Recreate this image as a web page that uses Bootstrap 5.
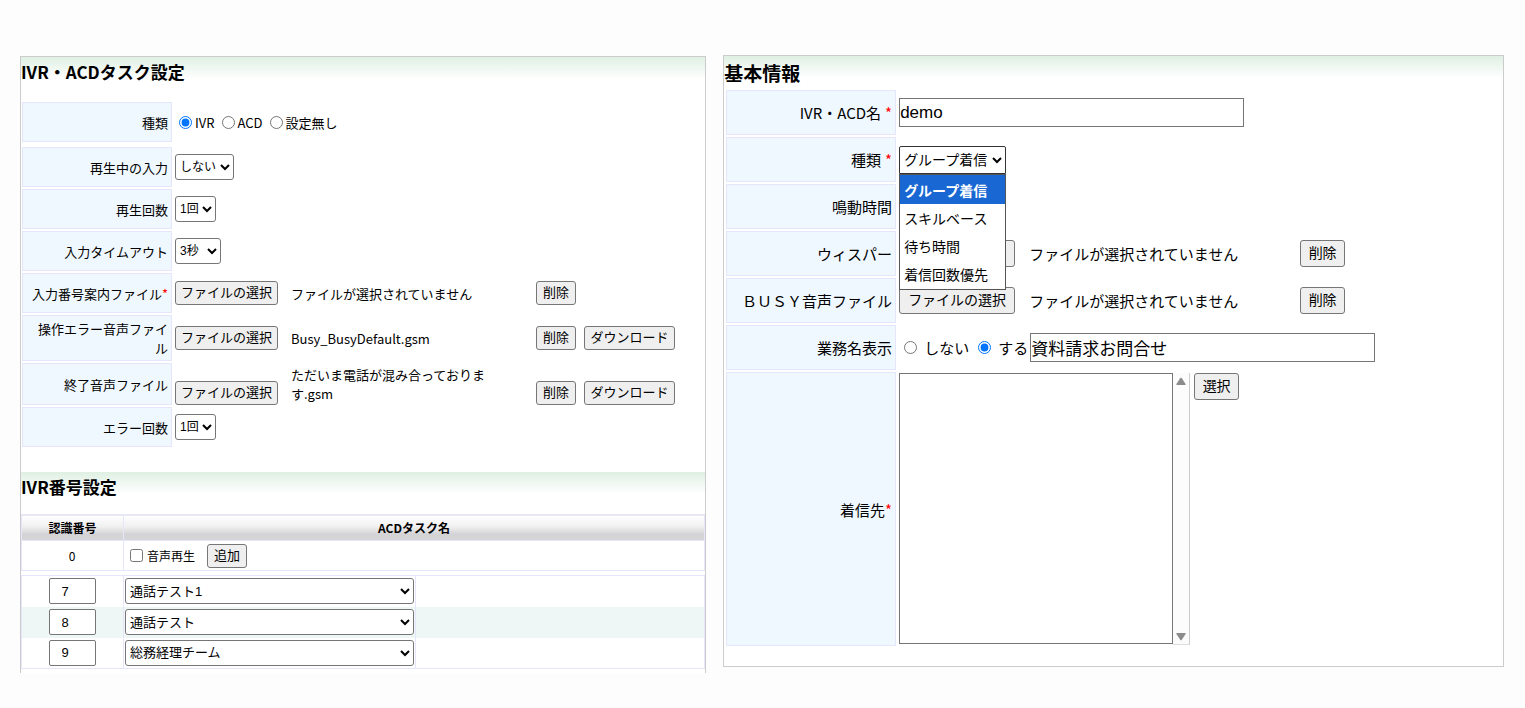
<!DOCTYPE html>
<html lang="ja">
<head>
<meta charset="utf-8">
<meta name="viewport" content="width=device-width, initial-scale=1">
<title>IVR・ACD設定</title>
<link rel="stylesheet" href="https://cdn.jsdelivr.net/npm/bootstrap@5.3.0/dist/css/bootstrap.min.css">
<style>
body { background: #fdfdfd; color: #000; font-family: "Noto Sans CJK JP", sans-serif; font-size: 13px; line-height: 19px; }
main { padding: 55px 21px 36px 20px; gap: 17px; }
.pane { background: #fff; border: 1px solid #ccc; min-width: 0; }
.pane-task { flex: 686 1 0; border-bottom: 0; margin-top: 1px; padding-bottom: 4px; }
.pane-basic { flex: 781 1 0; font-size: 15px; padding-bottom: 20px; }
.pane-title { margin: 0; font-weight: 700; font-size: 17px; line-height: 30px; height: 42px; color: #000; background: linear-gradient(#dff0e3, #fff 22px); }
.pane-basic .pane-title { font-size: 19px; line-height: 34px; height: 34px; }
.task-fields { padding: 3px 1px 25px; gap: 2px; }
.basic-fields { padding: 0 2px; gap: 2px; }
.field { min-height: 40px; gap: 3px; }
.pane-basic .field { min-height: 45px; }
.field-first { margin-bottom: 3px; }
.field-tall { min-height: 46px; }
.field-long { min-height: 42px; }
.field-long .file-name { align-self: center; }
.field-name { flex: 0 0 150px; background: #f0f8ff; border: 1px solid #e6e6fa; padding: 0 3px 0 4px; text-align: right; }
.pane-basic .field-name { flex-basis: 170px; }
.req { color: #f00; }
.file-name { width: 245px; padding-right: 40px; }
.pane-basic .file-name { width: 271px; padding-right: 0; }
button, select, input { font-family: "Liberation Sans", "Noto Sans CJK JP", sans-serif; color: #000; }
.btn-plain { background: #efefef; border: 1px solid #767676; border-radius: 3px; padding: 0; font-size: 13px; line-height: 22px; height: 24px; min-width: 40px; white-space: nowrap; }
.btn-file { width: 103px; margin-right: 13px; }
.btn-dl { width: 91px; margin-left: 8px; }
.pane-basic .btn-plain { font-size: 14px; height: 27px; min-width: 45px; line-height: 25px; }
.pane-basic .btn-file { width: 116px; margin-right: 14px; }
select { font-size: 13px; height: 26px; background: #fff; border: 1px solid #767676; border-radius: 3px; }
.pane-basic select { font-size: 14px; }
.sel-s { width: 41px; } .sel-m { width: 46px; } .sel-l { width: 59px; }
.task-fields select { padding: 0; font-size: 12px; }
.box { border: 1px solid #767676; font-size: 17px; height: 29px; width: 345px; padding: 0; }
input[type=radio], input[type=checkbox] { margin: 0; width: 13px; height: 13px; }
.choices label { margin: 0 7px 0 3px; }
.choices input:first-child { margin-left: 4px; }
.pane-basic .choices label { margin: 0 9px 0 7px; }
.pane-basic .choices label.before-box { margin-right: 2px; }
.pane-basic .choices input[type=radio] { margin-left: 0; }
.pane-basic .choices input:first-child { margin-left: 5px; }
.pane-basic .kind { width: 107px; height: 28px; border-color: #333; border-radius: 2px 2px 0 0; }
.kind-menu { position: absolute; top: 100%; left: 0; width: 107px; z-index: 5; margin: 0; padding: 0 0 1px; list-style: none; background: #fff; border: 1px solid #555; font-size: 14px; }
.kind-menu li { line-height: 28px; padding: 0 4px; white-space: nowrap; }
.kind-menu li:first-child { padding-top: 1px; background: #1967d2; color: #fff; font-weight: 700; }
.field-dest { height: 274px; }
.dest-area { padding-top: 1px; }
.pane-basic .dest-list { width: 274px; height: 271px; border: 1px solid #767676; border-radius: 0; overflow: hidden; }
.dest-scroll { width: 17px; height: 272px; background: #fcfcfc; border-right: 1px solid #ccc; border-bottom: 1px solid #ddd; padding: 4px 0 3px; }
.grid-table { width: 100%; border-collapse: collapse; font-size: 12px; table-layout: fixed; }
.grid-table th, .grid-table td { border: 1px solid #e6e6fa; padding: 0 2px; height: 30px; }
.grid-table th { height: 26px; text-align: center; background: linear-gradient(#fff, #f0f0f0 45%, #d3d3d6 75%, #d6d6d8); }
.grid-table td:first-child { padding: 0 2px 0 1px; }
.col-num { width: 102px; } .col-task { width: 292px; }
.grid-rows { margin-top: 4px; border: 1px solid #e6e6fa; }
.grid-rows td { border-top: 0; border-bottom: 0; height: 31px; }
.grid-rows tr:nth-child(2) td { background: #eff6f6; }
.num { width: 47px; height: 26px; border: 1px solid #767676; border-radius: 2px; font-size: 13px; padding: 0 12px; }
.grid-rows select { width: 100%; display: block; }
.grid-table .task-cell { padding: 0 1px; }
</style>
</head>
<body>
<main class="d-flex align-items-start">
  <section class="pane pane-task">
    <h2 class="pane-title">IVR・ACDタスク設定</h2>
    <div class="task-fields d-flex flex-column">
      <div class="field field-first d-flex">
        <div class="field-name d-flex align-items-center justify-content-end">種類</div>
        <div class="choices d-flex align-items-center">
          <input type="radio" name="task" id="t1" checked><label for="t1">IVR</label>
          <input type="radio" name="task" id="t2"><label for="t2">ACD</label>
          <input type="radio" name="task" id="t3"><label for="t3">設定無し</label>
        </div>
      </div>
      <div class="field d-flex">
        <label for="s1" class="field-name d-flex align-items-center justify-content-end">再生中の入力</label>
        <div class="d-flex align-items-center"><select id="s1" class="sel-l"><option>しない</option></select></div>
      </div>
      <div class="field d-flex">
        <label for="s2" class="field-name d-flex align-items-center justify-content-end">再生回数</label>
        <div class="d-flex align-items-center"><select id="s2" class="sel-s"><option>1回</option></select></div>
      </div>
      <div class="field d-flex">
        <label for="s3" class="field-name d-flex align-items-center justify-content-end">入力タイムアウト</label>
        <div class="d-flex align-items-center"><select id="s3" class="sel-m"><option>3秒</option></select></div>
      </div>
      <div class="field d-flex">
        <div class="field-name d-flex align-items-center justify-content-end">入力番号案内ファイル<span class="req">*</span></div>
        <div class="d-flex align-items-center">
          <button type="button" class="btn-plain btn-file">ファイルの選択</button><span class="file-name">ファイルが選択されていません</span>
          <button type="button" class="btn-plain">削除</button>
        </div>
      </div>
      <div class="field field-tall d-flex">
        <div class="field-name d-flex align-items-center justify-content-end">操作エラー音声ファイル</div>
        <div class="d-flex align-items-center">
          <button type="button" class="btn-plain btn-file">ファイルの選択</button><span class="file-name">Busy_BusyDefault.gsm</span>
          <button type="button" class="btn-plain">削除</button>
          <button type="button" class="btn-plain btn-dl">ダウンロード</button>
        </div>
      </div>
      <div class="field field-long d-flex">
        <div class="field-name d-flex align-items-center justify-content-end">終了音声ファイル</div>
        <div class="d-flex align-items-end">
          <button type="button" class="btn-plain btn-file">ファイルの選択</button><span class="file-name">ただいま電話が混み合っております.gsm</span>
          <button type="button" class="btn-plain">削除</button>
          <button type="button" class="btn-plain btn-dl">ダウンロード</button>
        </div>
      </div>
      <div class="field d-flex">
        <label for="s4" class="field-name d-flex align-items-center justify-content-end">エラー回数</label>
        <div class="d-flex align-items-center"><select id="s4" class="sel-s"><option>1回</option></select></div>
      </div>
    </div>

    <h2 class="pane-title">IVR番号設定</h2>
    <table class="grid-table">
      <colgroup><col class="col-num"><col></colgroup>
      <thead><tr><th>認識番号</th><th>ACDタスク名</th></tr></thead>
      <tbody><tr>
        <td class="text-center">0</td>
        <td><div class="d-flex align-items-center ps-1"><input type="checkbox" id="play"><label for="play" class="ms-1 me-2 pe-1">音声再生</label><button type="button" class="btn-plain">追加</button></div></td>
      </tr></tbody>
    </table>
    <table class="grid-table grid-rows">
      <colgroup><col class="col-num"><col class="col-task"><col></colgroup>
      <tbody>
        <tr><td class="text-center"><input class="num" type="text" value="7" aria-label="認識番号"></td><td class="task-cell"><select aria-label="ACDタスク名"><option>通話テスト1</option></select></td><td></td></tr>
        <tr><td class="text-center"><input class="num" type="text" value="8" aria-label="認識番号"></td><td class="task-cell"><select aria-label="ACDタスク名"><option>通話テスト</option></select></td><td></td></tr>
        <tr><td class="text-center"><input class="num" type="text" value="9" aria-label="認識番号"></td><td class="task-cell"><select aria-label="ACDタスク名"><option>総務経理チーム</option></select></td><td></td></tr>
      </tbody>
    </table>
  </section>

  <section class="pane pane-basic">
    <h2 class="pane-title">基本情報</h2>
    <div class="basic-fields d-flex flex-column">
      <div class="field d-flex">
        <label for="b1" class="field-name d-flex align-items-center justify-content-end">IVR・ACD名<span class="req ms-1">*</span></label>
        <div class="d-flex align-items-center"><input id="b1" class="box" type="text" value="demo"></div>
      </div>
      <div class="field d-flex">
        <label for="b2" class="field-name d-flex align-items-center justify-content-end">種類<span class="req ms-1">*</span></label>
        <div class="d-flex align-items-center">
          <div class="position-relative d-flex">
            <select id="b2" class="kind"><option>グループ着信</option><option>スキルベース</option><option>待ち時間</option><option>着信回数優先</option></select>
            <ul class="kind-menu"><li>グループ着信</li><li>スキルベース</li><li>待ち時間</li><li>着信回数優先</li></ul>
          </div>
        </div>
      </div>
      <div class="field d-flex">
        <div class="field-name d-flex align-items-center justify-content-end">鳴動時間</div>
      </div>
      <div class="field d-flex">
        <div class="field-name d-flex align-items-center justify-content-end">ウィスパー</div>
        <div class="d-flex align-items-center">
          <button type="button" class="btn-plain btn-file" aria-label="ファイルの選択"></button><span class="file-name">ファイルが選択されていません</span>
          <button type="button" class="btn-plain">削除</button>
        </div>
      </div>
      <div class="field d-flex">
        <div class="field-name d-flex align-items-center justify-content-end">ＢＵＳＹ音声ファイル</div>
        <div class="d-flex align-items-center">
          <button type="button" class="btn-plain btn-file">ファイルの選択</button><span class="file-name">ファイルが選択されていません</span>
          <button type="button" class="btn-plain">削除</button>
        </div>
      </div>
      <div class="field d-flex">
        <div class="field-name d-flex align-items-center justify-content-end">業務名表示</div>
        <div class="choices d-flex align-items-center">
          <input type="radio" name="show" id="r1"><label for="r1">しない</label>
          <input type="radio" name="show" id="r2" checked><label for="r2" class="before-box">する</label>
          <input class="box" type="text" value="資料請求お問合せ" aria-label="業務名">
        </div>
      </div>
      <div class="field field-dest d-flex">
        <label for="b3" class="field-name d-flex align-items-center justify-content-end">着信先<span class="req">*</span></label>
        <div class="dest-area d-flex align-items-start">
          <select id="b3" class="dest-list" multiple></select>
          <div class="dest-scroll d-flex flex-column justify-content-between align-items-center" aria-hidden="true">
            <svg width="10" height="9" viewBox="0 0 10 9"><path d="M4.2 1.2Q5 .2 5.8 1.2L9.6 7Q9.9 8 9 8H1Q.1 8 .4 7Z" fill="#8b8b8b"/></svg>
            <svg width="10" height="9" viewBox="0 0 10 9"><path d="M4.2 7.8Q5 8.8 5.8 7.8L9.6 2Q9.9 1 9 1H1Q.1 1 .4 2Z" fill="#8b8b8b"/></svg>
          </div>
          <button type="button" class="btn-plain ms-1">選択</button>
        </div>
      </div>
    </div>
  </section>
</main>
<script src="https://cdn.jsdelivr.net/npm/bootstrap@5.3.0/dist/js/bootstrap.bundle.min.js"></script>
</body>
</html>
